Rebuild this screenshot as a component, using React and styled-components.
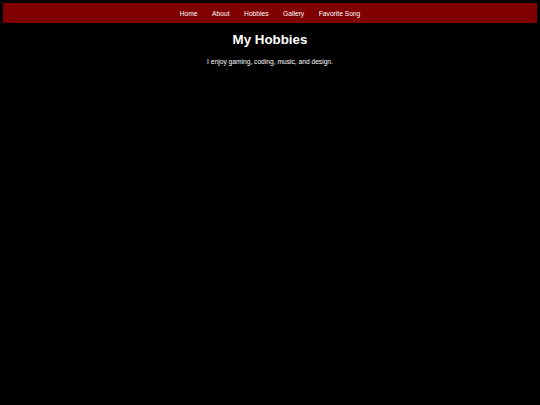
import React from "react";
import styled, { createGlobalStyle } from "styled-components";

const Global = createGlobalStyle`
  html, body { background: #000; }
  body {
    margin: 3.33px;
    font-family: "Liberation Sans", Arial, sans-serif;
    font-size: 6.67px;
    color: #fff;
  }
`;

const Nav = styled.nav`
  background: #800000;
  display: flex;
  justify-content: center;
  align-items: center;
  gap: 14.6px;
  height: 20px;
`;

const NavLink = styled.a`
  color: #fff;
  text-decoration: none;
  font-size: 6.67px;
`;

const Title = styled.h1`
  text-align: center;
  font-size: 13.33px;
  margin: 0.67em 0;
`;

const Text = styled.p`
  text-align: center;
  font-size: 6.67px;
  margin: 10.5px 0 6.67px;
`;

export default function App() {
  const links = ["Home", "About", "Hobbies", "Gallery", "Favorite Song"];
  return (
    <>
      <Global />
      <Nav>
        {links.map((l) => (
          <NavLink key={l} href="#">{l}</NavLink>
        ))}
      </Nav>
      <Title>My Hobbies</Title>
      <Text>I enjoy gaming, coding, music, and design.</Text>
    </>
  );
}
